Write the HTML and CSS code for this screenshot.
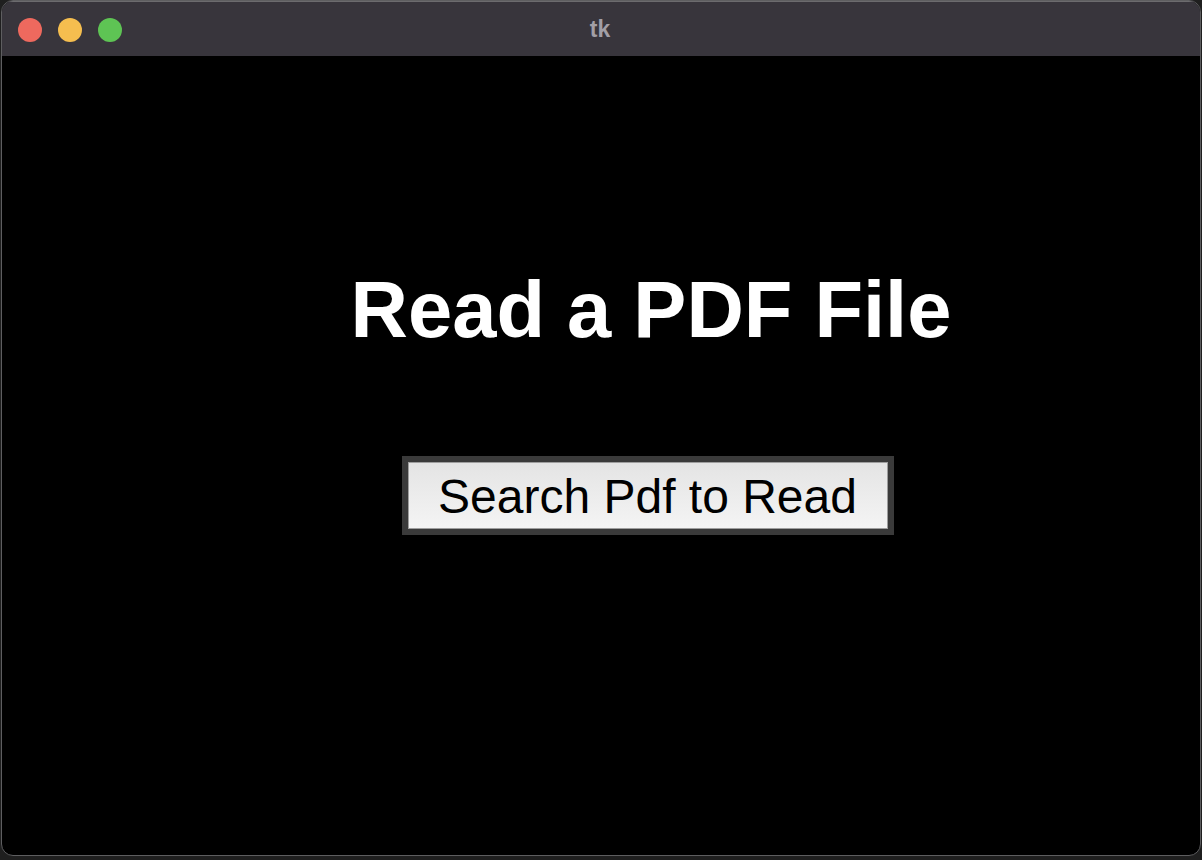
FILE: index.html
```html
<!DOCTYPE html>
<html>
<head>
<meta charset="utf-8">
<link rel="stylesheet" href="styles.css">
</head>
<body>
<div class="window">
  <div class="titlebar">
    <div class="lights">
      <span class="light red"></span>
      <span class="light yellow"></span>
      <span class="light green"></span>
    </div>
    <div class="title">tk</div>
  </div>
  <div class="content">
    <h1 class="heading">Read a PDF File</h1>
    <div class="btn-frame">
      <button class="btn">Search Pdf to Read</button>
    </div>
  </div>
</div>
</body>
</html>
```
FILE: styles.css
```css
html, body {
  margin: 0;
  padding: 0;
  background: #1f1f1f;
  width: 1202px;
  height: 860px;
  overflow: hidden;
  font-family: "Liberation Sans", Arial, sans-serif;
}
.window {
  box-sizing: border-box;
  width: 1200px;
  height: 856px;
  margin: 0 0 0 1px;
  border: 1px solid #5e5e60;
  border-radius: 12px;
  overflow: hidden;
  background: #000;
  display: flex;
  flex-direction: column;
}
.titlebar {
  height: 55px;
  flex: none;
  background: #38353c;
  border-top: 1px solid #6c6b6e;
  box-sizing: border-box;
  display: flex;
  align-items: center;
  position: relative;
}
.lights {
  display: flex;
  gap: 16px;
  padding-left: 16px;
  margin-top: 1px;
}
.light {
  width: 24px;
  height: 24px;
  border-radius: 50%;
  display: block;
}
.red { background: #ee695e; }
.yellow { background: #f5be4f; }
.green { background: #5ec454; }
.title {
  position: absolute;
  left: 0;
  right: 0;
  top: 0;
  bottom: 0;
  display: flex;
  align-items: center;
  justify-content: center;
  color: #a29fa6;
  font-weight: bold;
  font-size: 23px;
  padding-right: 2px;
}
.content {
  flex: 1;
  display: flex;
  flex-direction: column;
  align-items: center;
  padding-top: 214px;
  padding-left: 95px;
}
.heading {
  margin: 0 0 0 5px;
  font-size: 79.5px;
  line-height: 1;
  font-weight: bold;
  color: #fff;
}
.btn-frame {
  margin-top: 106px;
  margin-right: 2px;
  background: #3a3a3a;
  padding: 6px;
  display: flex;
}
.btn {
  width: 480px;
  height: 67px;
  box-sizing: border-box;
  border: 1px solid #9e9e9e;
  background: linear-gradient(#e4e4e4, #f4f4f4);
  font-family: "Liberation Sans", Arial, sans-serif;
  font-size: 48px;
  color: #000;
  padding: 4px 0 0 0;
  line-height: 1;
}
```
